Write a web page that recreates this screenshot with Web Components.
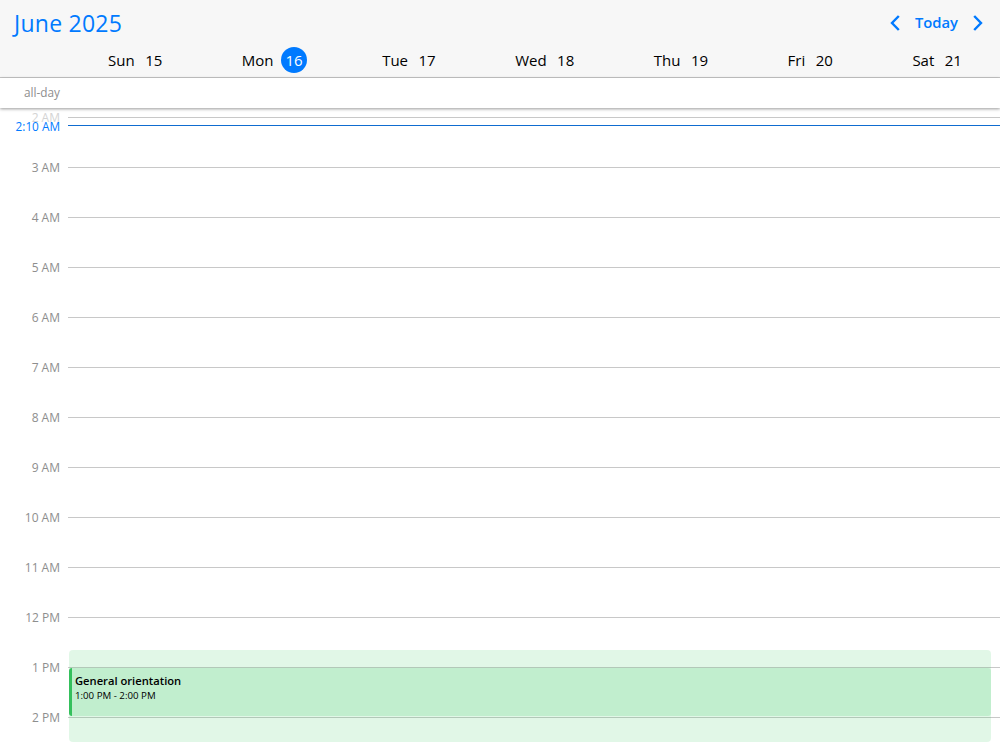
<!DOCTYPE html>
<html>
<head>
<meta charset="utf-8">
<title>June 2025</title>
<style>
  html, body { margin: 0; height: 100%; overflow: hidden; background: #fff; }
  body { font-family: "Open Sans", "Noto Sans", sans-serif; }
</style>
</head>
<body>
<week-calendar></week-calendar>

<script>
class CalHeader extends HTMLElement {
  constructor() {
    super();
    this.attachShadow({ mode: 'open' });
    this.shadowRoot.innerHTML = `
      <style>
        :host {
          display: block;
          background: #f7f7f7;
          border-bottom: 1px solid #c8c8c8;
          height: 77px;
        }
        .top {
          display: flex;
          justify-content: space-between;
          align-items: center;
          height: 45px;
          padding: 0 16px 0 14px;
        }
        .title { font-size: 23px; color: #007aff; letter-spacing: 0.25px; }
        .nav { display: flex; align-items: center; gap: 14px; color: #007aff; font-weight: 600; font-size: 14.8px; }
        .nav span { margin-top: -2px; }
        svg { display: block; }
        .days {
          display: flex;
          justify-content: space-between;
          align-items: center;
          height: 30px;
          padding: 0 38px 0 108px;
        }
      </style>
      <div class="top">
        <div class="title">June 2025</div>
        <div class="nav">
          <svg width="12" height="18" viewBox="0 0 12 18"><path d="M9.8 2 3 9l6.8 7" fill="none" stroke="#007aff" stroke-width="2.4"/></svg>
          <span>Today</span>
          <svg width="12" height="18" viewBox="0 0 12 18"><path d="M2.2 2 9 9l-6.8 7" fill="none" stroke="#007aff" stroke-width="2.4"/></svg>
        </div>
      </div>
      <div class="days"><slot></slot></div>
    `;
  }
}
customElements.define('cal-header', CalHeader);

class CalDay extends HTMLElement {
  constructor() {
    super();
    this.attachShadow({ mode: 'open' });
    this.shadowRoot.innerHTML = `
      <style>
        :host {
          display: flex;
          flex: none;
          align-items: center;
          gap: 10.5px;
          font-size: 15px;
          color: #000;
        }
        :host([today]) { gap: 12px; }
        .num {
          height: 26px;
          line-height: 26px;
          text-align: center;
          border-radius: 13px;
        }
        :host([today]) .num {
          background: #007aff;
          color: #fff;
          padding: 0 4.4px;
          margin: 0 -4.4px;
        }
      </style>
      <span id="name"></span><span class="num" id="num"></span>
    `;
  }
  connectedCallback() {
    this.shadowRoot.getElementById('name').textContent = this.getAttribute('name');
    this.shadowRoot.getElementById('num').textContent = this.getAttribute('num');
  }
}
customElements.define('cal-day', CalDay);

class AllDayRow extends HTMLElement {
  constructor() {
    super();
    this.attachShadow({ mode: 'open' });
    this.shadowRoot.innerHTML = `
      <style>
        :host {
          display: flex;
          align-items: center;
          height: 30px;
          background: #fff;
          position: relative;
          z-index: 2;
          box-shadow: 0 1px 3px rgba(0,0,0,.4);
        }
        .label {
          width: 60px;
          margin-top: -2px;
          text-align: right;
          font-size: 11.8px;
          color: #8e8e8e;
        }
      </style>
      <div class="label">all-day</div>
    `;
  }
}
customElements.define('all-day-row', AllDayRow);

class HourRow extends HTMLElement {
  constructor() {
    super();
    this.attachShadow({ mode: 'open' });
    this.shadowRoot.innerHTML = `
      <style>
        :host {
          display: block;
          height: 50px;
          position: relative;
        }
        .label {
          position: absolute;
          right: calc(100% - 60px);
          top: 0;
          transform: translateY(-50%);
          font-size: 12px;
          color: #8e8e8e;
          white-space: nowrap;
        }
        :host([faded]) .label { color: #d4d4d4; }
        .line { margin-left: 68px; height: 1px; background: #c8c8c8; }
      </style>
      <div class="line"></div>
      <div class="label"><slot></slot></div>
    `;
  }
}
customElements.define('hour-row', HourRow);

class NowLine extends HTMLElement {
  constructor() {
    super();
    this.attachShadow({ mode: 'open' });
    this.shadowRoot.innerHTML = `
      <style>
        :host {
          position: absolute;
          top: 17px;
          left: 0;
          right: 0;
          display: block;
        }
        .line { margin-left: 68px; height: 1px; background: #0f6cd0; }
        .label {
          position: absolute;
          right: calc(100% - 60px);
          top: 1px;
          transform: translateY(-50%);
          font-size: 11.8px;
          color: #007aff;
          white-space: nowrap;
        }
      </style>
      <div class="line"></div>
      <div class="label"><slot></slot></div>
    `;
  }
}
customElements.define('now-line', NowLine);

class CalEvent extends HTMLElement {
  constructor() {
    super();
    this.attachShadow({ mode: 'open' });
    this.shadowRoot.innerHTML = `
      <style>
        :host {
          position: absolute;
          left: 69px;
          right: 9px;
          top: 542px;
          height: 92px;
          background: rgba(52,199,92,.15);
          border-radius: 4px;
          display: block;
        }
        .inner {
          position: absolute;
          left: 0;
          right: 0;
          top: 18px;
          height: 48px;
          box-sizing: border-box;
          background: rgba(52,199,92,.18);
          border-left: 3px solid #34c05c;
          border-radius: 3px;
          padding: 5px 3px;
          color: #000;
        }
        .title { font-size: 11.2px; font-weight: 600; line-height: 16px; }
        .time { font-size: 9.7px; line-height: 13px; }
      </style>
      <div class="inner">
        <div class="title"><slot name="title"></slot></div>
        <div class="time"><slot name="time"></slot></div>
      </div>
    `;
  }
}
customElements.define('cal-event', CalEvent);

class WeekCalendar extends HTMLElement {
  constructor() {
    super();
    this.attachShadow({ mode: 'open' });
    const days = [['Sun',15],['Mon',16],['Tue',17],['Wed',18],['Thu',19],['Fri',20],['Sat',21]];
    const hours = ['3 AM','4 AM','5 AM','6 AM','7 AM','8 AM','9 AM','10 AM','11 AM','12 PM','1 PM','2 PM'];
    this.shadowRoot.innerHTML = `
      <style>
        :host {
          display: flex;
          flex-direction: column;
          height: 750px;
          overflow: hidden;
        }
        cal-header, all-day-row { flex: none; }
        .body {
          flex: 1;
          position: relative;
          overflow: hidden;
          padding-top: 9px;
        }
      </style>
      <cal-header>
        ${days.map(d => `<cal-day name="${d[0]}" num="${d[1]}"${d[1] === 16 ? ' today' : ''}></cal-day>`).join('')}
      </cal-header>
      <all-day-row></all-day-row>
      <div class="body">
        <hour-row faded>2 AM</hour-row>
        ${hours.map(h => `<hour-row>${h}</hour-row>`).join('')}
        <now-line>2:10 AM</now-line>
        <cal-event>
          <span slot="title">General orientation</span>
          <span slot="time">1:00 PM - 2:00 PM</span>
        </cal-event>
      </div>
    `;
  }
}
customElements.define('week-calendar', WeekCalendar);
</script>
</body>
</html>
